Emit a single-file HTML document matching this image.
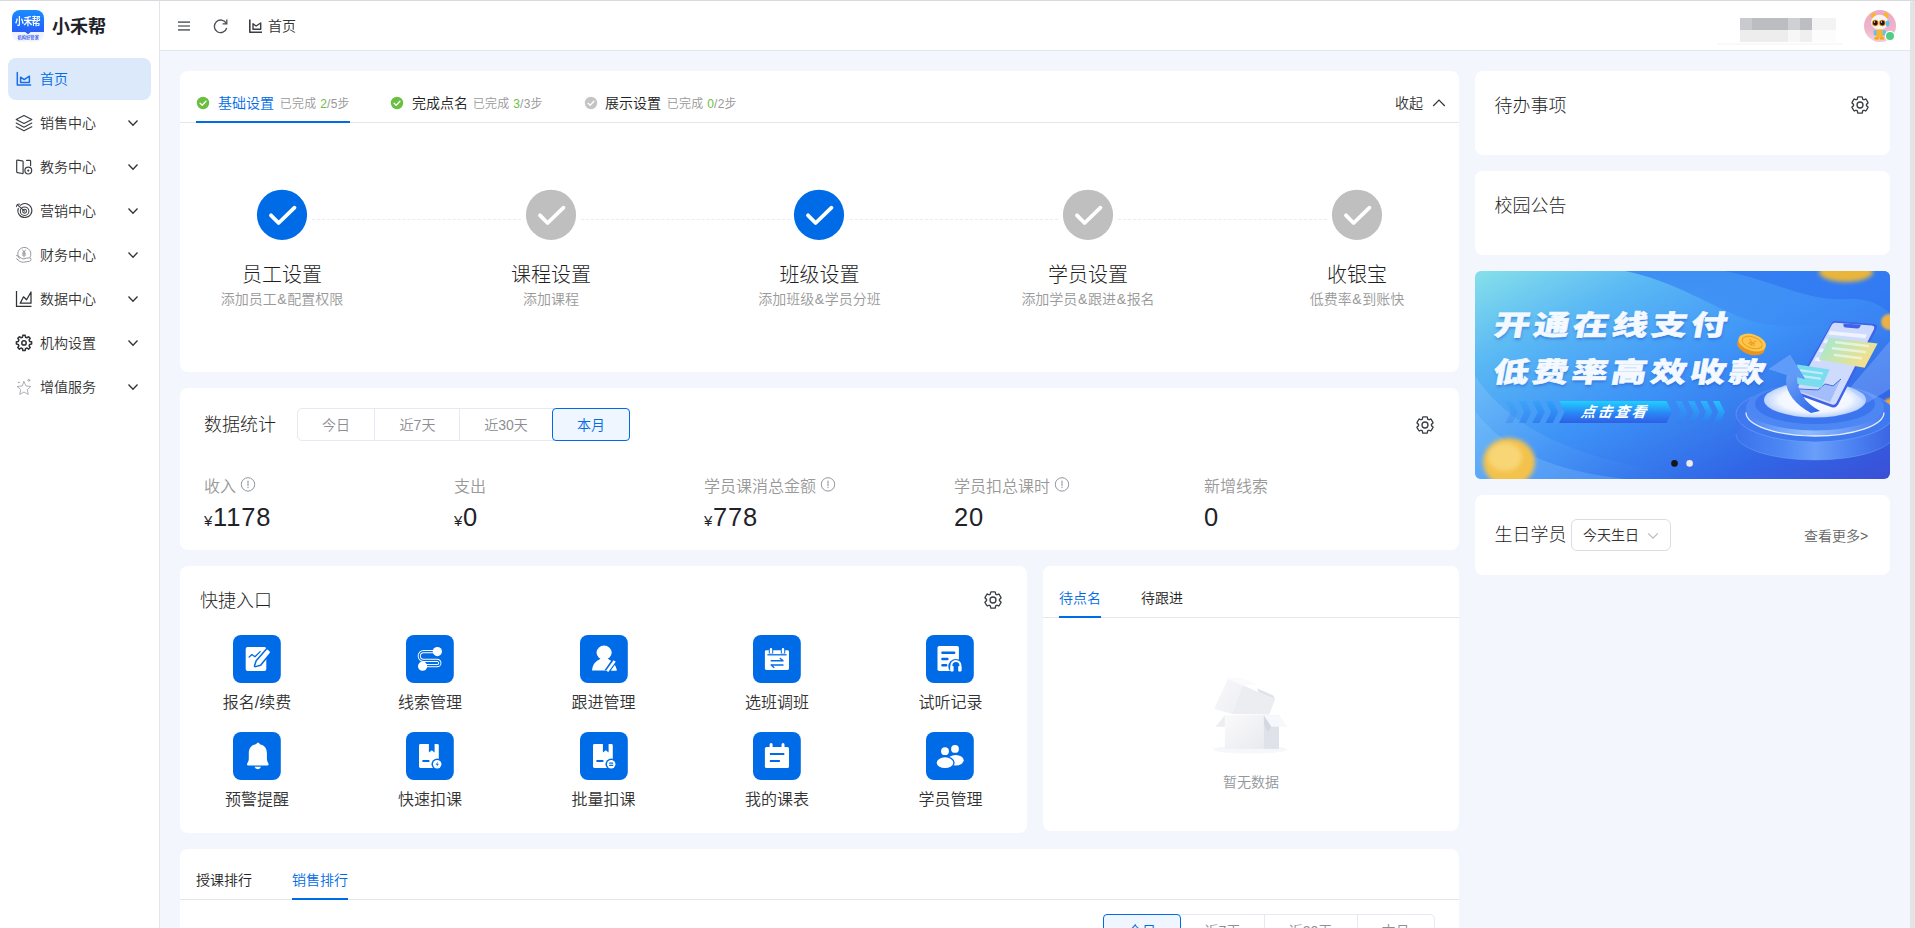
<!DOCTYPE html>
<html lang="zh-CN">
<head>
<meta charset="utf-8">
<title>小禾帮 - 首页</title>
<style>
*{box-sizing:border-box;margin:0;padding:0}
html,body{width:1915px;height:928px;overflow:hidden}
body{position:relative;background:#f3f6fd;font-family:"Liberation Sans","Noto Sans CJK SC",sans-serif;font-size:14px;font-weight:350;color:#333}
.abs{position:absolute}
.t{position:absolute;white-space:nowrap;line-height:1;}
.card{position:absolute;background:#fff;border-radius:8px}
svg{display:block;overflow:visible}
/* top line + scrollbar */
#topline{left:0;top:0;width:1915px;height:1px;background:#d9dae0}
#scroll{left:1910px;top:1px;width:5px;height:927px;background:#e4e4e5;border-top-left-radius:3px}
/* sidebar */
#side{left:0;top:1px;width:160px;height:927px;background:#fff;border-right:1px solid #e3e4ea}
#head{left:160px;top:1px;width:1750px;height:50px;background:#fff;border-bottom:1px solid #e3e5ec}
.mi{position:absolute;left:8px;width:143px;height:42px;border-radius:8px}
.mi .ic{position:absolute;left:8px;top:13px;width:16px;height:16px}
.mi .tx{position:absolute;left:32px;top:0;line-height:42px;font-size:14px;color:#333}
.mi .ch{position:absolute;left:120px;top:17px;width:10px;height:8px}
.mi.on{background:#dbe9fb}
.mi.on .tx{color:#006be6}
.bt{font-size:27.8px;font-weight:900;color:#f4f9ff;letter-spacing:2.8px;transform-origin:0 100%;transform:scaleX(1.285) skewX(-8deg);-webkit-text-stroke:0.55px #f4f9ff;text-shadow:0.5px 2px 2.5px rgba(30,80,200,0.5)}
.blue{color:#006be6}
.g9{color:#999}
</style>
</head>
<body>
<svg width="0" height="0" style="position:absolute"><defs>
<symbol id="gear6" viewBox="0 0 48 48"><g fill="none" stroke="#3a3d42" stroke-width="2.9" stroke-linejoin="round"><path d="M17.48 11.68Q18.27 11.23 18.53 9.61L18.97 6.83Q19.07 6.17 20.35 6.17L27.65 6.17Q28.93 6.17 29.03 6.83L29.47 9.61Q29.73 11.23 30.52 11.68L31.41 12.20Q32.20 12.65 33.73 12.06L36.36 11.06Q36.98 10.82 37.62 11.93L41.27 18.24Q41.91 19.35 41.39 19.77L39.20 21.54Q37.93 22.57 37.93 23.49L37.93 24.51Q37.93 25.43 39.20 26.46L41.39 28.23Q41.91 28.65 41.27 29.76L37.62 36.07Q36.98 37.18 36.36 36.94L33.73 35.94Q32.20 35.35 31.41 35.80L30.52 36.32Q29.73 36.77 29.47 38.39L29.03 41.17Q28.93 41.83 27.65 41.83L20.35 41.83Q19.07 41.83 18.97 41.17L18.53 38.39Q18.27 36.77 17.48 36.32L16.59 35.80Q15.80 35.35 14.27 35.94L11.64 36.94Q11.02 37.18 10.38 36.07L6.73 29.76Q6.09 28.65 6.61 28.23L8.80 26.46Q10.07 25.43 10.07 24.51L10.07 23.49Q10.07 22.57 8.80 21.54L6.61 19.77Q6.09 19.35 6.73 18.24L10.38 11.93Q11.02 10.82 11.64 11.06L14.27 12.06Q15.80 12.65 16.59 12.20Z"/><circle cx="24" cy="24" r="6.5"/></g></symbol>
<symbol id="info" viewBox="0 0 16 16"><circle cx="8" cy="7.4" r="6.7" fill="none" stroke="#8b8f99" stroke-width="0.95"/><path d="M8 3.6V9.2" stroke="#8b8f99" stroke-width="1" fill="none"/><circle cx="8" cy="10.6" r="0.65" fill="#8b8f99"/></symbol>
</defs></svg>
<div class="abs" id="topline"></div>
<div class="abs" id="scroll"></div>

<!-- ============ SIDEBAR ============ -->
<div class="abs" id="side">
  <div class="abs" id="logo" style="left:12px;top:9px;width:32px;height:32px;border-radius:8px;overflow:hidden;background:linear-gradient(180deg,#1a8cff 0%,#1f6bff 50%,#2a5ef6 67.5%,#eef2ff 68.5%,#f6f8ff 100%)">
    <span class="t" style="left:3.2px;top:7.2px;font-size:9px;font-weight:700;color:#fff;letter-spacing:-0.4px;transform:scale(0.98,1.12);transform-origin:0 0">小禾帮</span>
    <svg class="abs" style="left:0;top:0" width="32" height="32" viewBox="0 0 32 32"><path d="M12.6 21.6h6.8L16 24.2z" fill="#2a5ef6"/></svg>
    <span class="t" style="left:5.5px;top:25.8px;font-size:4.2px;font-weight:700;color:#3f66f0;letter-spacing:0.1px">机构好管家</span>
  </div>
  <span class="t" id="brand" style="left:52px;top:17px;font-size:18px;font-weight:700;color:#1f2329">小禾帮</span>
  <div class="mi on" style="top:57px"><span class="tx">首页</span></div>
  <div class="mi" style="top:101px"><span class="tx">销售中心</span><svg class="ch" viewBox="0 0 10 8"><path d="M0.5 1.5 5 6.3 9.5 1.5" fill="none" stroke="#333" stroke-width="1.3"/></svg></div>
  <div class="mi" style="top:145px"><span class="tx">教务中心</span><svg class="ch" viewBox="0 0 10 8"><path d="M0.5 1.5 5 6.3 9.5 1.5" fill="none" stroke="#333" stroke-width="1.3"/></svg></div>
  <div class="mi" style="top:189px"><span class="tx">营销中心</span><svg class="ch" viewBox="0 0 10 8"><path d="M0.5 1.5 5 6.3 9.5 1.5" fill="none" stroke="#333" stroke-width="1.3"/></svg></div>
  <div class="mi" style="top:233px"><span class="tx">财务中心</span><svg class="ch" viewBox="0 0 10 8"><path d="M0.5 1.5 5 6.3 9.5 1.5" fill="none" stroke="#333" stroke-width="1.3"/></svg></div>
  <div class="mi" style="top:277px"><span class="tx">数据中心</span><svg class="ch" viewBox="0 0 10 8"><path d="M0.5 1.5 5 6.3 9.5 1.5" fill="none" stroke="#333" stroke-width="1.3"/></svg></div>
  <div class="mi" style="top:321px"><span class="tx">机构设置</span><svg class="ch" viewBox="0 0 10 8"><path d="M0.5 1.5 5 6.3 9.5 1.5" fill="none" stroke="#333" stroke-width="1.3"/></svg></div>
  <div class="mi" style="top:365px"><span class="tx">增值服务</span><svg class="ch" viewBox="0 0 10 8"><path d="M0.5 1.5 5 6.3 9.5 1.5" fill="none" stroke="#333" stroke-width="1.3"/></svg></div>
</div>

<!-- sidebar icons (page coordinates) -->
<svg class="abs" id="sideicons" style="left:0;top:0" width="160" height="420" viewBox="0 0 160 420" fill="none" stroke-linecap="round" stroke-linejoin="round">
  <!-- 首页 -->
  <g stroke="#1a6ee8" stroke-width="1.5">
    <path d="M17.3 72.5V85.1H30.6"/>
    <path d="M20.6 77.2 24.2 79.6 29.4 76.2V82.4H20.6Z"/>
  </g>
  <!-- 销售中心 -->
  <g stroke="#3a3d42" stroke-width="1.15">
    <path d="M24 115.4 31.8 119.5 24 123.6 16.2 119.5Z"/>
    <path d="M16.2 123.1 24 127.2 31.8 123.1"/>
    <path d="M16.2 126.7 24 130.8 31.8 126.7"/>
  </g>
  <!-- 教务中心 -->
  <g stroke="#3a3d42" stroke-width="1.2">
    <path d="M16.7 160.9Q16.7 160 17.6 160.1L22.4 160.9Q23.1 161 23.1 161.8V172.8Q23.1 173.7 22.3 173.5L17.5 172.7Q16.7 172.6 16.7 171.8Z"/>
    <path d="M26.6 160.4H29.8Q30.6 160.4 30.6 161.2V165.6"/>
    <circle cx="28.3" cy="170.6" r="3.4"/>
    <circle cx="28.3" cy="170.6" r="0.5" fill="#3a3d42"/>
  </g>
  <!-- 营销中心 -->
  <g stroke="#3a3d42" stroke-width="1.05">
    <path d="M20.3 205.3A7 7 0 1 1 18.3 208.2"/>
    <circle cx="24.6" cy="211.2" r="4.3"/>
    <circle cx="24.6" cy="211.2" r="1.9"/>
    <path d="M24.6 211.2 17.2 204.6M17.2 204.6 16.4 206.6M17.2 204.6 19.4 204.1"/>
  </g>
  <!-- 财务中心 -->
  <g stroke="#8a8d92" stroke-width="0.9">
    <path d="M19.3 258.3A6.6 6.6 0 1 1 30 257.4"/>
    <path d="M22.6 250 24 252.4 25.4 250M24 252.4V257M22.3 253.2H25.7M22.3 255H25.7"/>
    <path d="M16.6 255.5Q19.5 256.5 21.5 258.3 23 259.5 25 258.6L26.6 258H29.8Q31 258 31 259.4 31 261 29.6 261.3L23.5 262.2Q21.5 262.4 19.8 261.3L16.6 258.8"/>
  </g>
  <!-- 数据中心 -->
  <g stroke="#2f3236" stroke-width="1.25" stroke-linejoin="miter" stroke-linecap="butt">
    <path d="M16.5 291V306.4H31.5"/>
    <path d="M20.2 303.2 23.5 296.8 26.6 299.8 31 292V303.2Z" stroke-linejoin="round"/>
  </g>
  <!-- 机构设置 (8 tooth gear) -->
  <g stroke="#2f3236" stroke-width="1.5">
    <path d="M22.51 337.19 L22.83 335.29 L25.17 335.29 L25.49 337.19 L26.98 337.81 L28.55 336.69 L30.21 338.35 L29.09 339.92 L29.71 341.41 L31.61 341.73 L31.61 344.07 L29.71 344.39 L29.09 345.88 L30.21 347.45 L28.55 349.11 L26.98 347.99 L25.49 348.61 L25.17 350.51 L22.83 350.51 L22.51 348.61 L21.02 347.99 L19.45 349.11 L17.79 347.45 L18.91 345.88 L18.29 344.39 L16.39 344.07 L16.39 341.73 L18.29 341.41 L18.91 339.92 L17.79 338.35 L19.45 336.69 L21.02 337.81Z"/>
    <circle cx="24" cy="342.9" r="2.2"/>
  </g>
  <!-- 增值服务 -->
  <g stroke="#a3a6ab" stroke-width="0.9">
    <path d="M24 381.6 26 386 30.8 386.5 27.2 389.7 28.3 394.4 24 392 19.7 394.4 20.8 389.7 17.2 386.5 22 386Z"/>
    <circle cx="28.8" cy="380.3" r="1"/>
    <circle cx="18.8" cy="382.4" r="0.4"/>
  </g>
</svg>

<!-- ============ HEADER ============ -->
<div class="abs" id="head">
  <!-- local coords: page x-160, page y-1 -->
  <svg class="abs" style="left:0;top:0" width="160" height="50" viewBox="160 1 160 50" fill="none">
    <!-- hamburger -->
    <path d="M178 22.1H190M178 26H190M178 29.9H190" stroke="#6f7277" stroke-width="1.6"/>
    <!-- refresh -->
    <path d="M226.3 23.6A6.3 6.3 0 1 0 226.7 28" stroke="#4a4d52" stroke-width="1.3"/>
    <path d="M226.8 19.6V23.8H222.6" stroke="#4a4d52" stroke-width="1.3"/>
    <!-- chart -->
    <g stroke="#3a3d42" stroke-width="1.6" stroke-linejoin="round">
      <path d="M249.8 19.6V32.2H262"/>
      <path d="M253 23.8 256.1 26 260.7 23V29.3H253Z" stroke-width="1.4"/>
    </g>
  </svg>
  <span class="t" style="left:108px;top:18px;font-size:14px;color:#333">首页</span>
  <!-- blurred user name (mosaic) -->
  <div class="abs" style="left:1580px;top:17px;width:96px;height:24px">
    <div class="abs" style="left:0;top:0;width:12px;height:12px;background:#c9cacd"></div>
    <div class="abs" style="left:12px;top:0;width:36px;height:12px;background:#bcbdc0"></div>
    <div class="abs" style="left:48px;top:0;width:12px;height:12px;background:#cfd0d3"></div>
    <div class="abs" style="left:60px;top:0;width:12px;height:12px;background:#bdbec1"></div>
    <div class="abs" style="left:72px;top:0;width:24px;height:12px;background:#f3f3f4"></div>
    <div class="abs" style="left:0;top:12px;width:48px;height:12px;background:#ededee"></div>
    <div class="abs" style="left:48px;top:12px;width:12px;height:12px;background:#f7f7f8"></div>
    <div class="abs" style="left:60px;top:12px;width:12px;height:12px;background:#efeff0"></div>
    <div class="abs" style="left:72px;top:12px;width:24px;height:12px;background:#fcfcfc"></div>
  </div>
  <div class="abs" style="left:1557px;top:42px;width:126px;height:2px;background:#f9f9fb"></div>
  <!-- avatar -->
  <svg class="abs" style="left:1703px;top:7px" width="36" height="36" viewBox="0 0 36 36">
    <defs><clipPath id="avc"><circle cx="17" cy="18" r="16"/></clipPath><linearGradient id="avg" x1="0" y1="0" x2="0" y2="1"><stop offset="0" stop-color="#ecaac4"/><stop offset="0.6" stop-color="#eeb4ca"/><stop offset="1" stop-color="#f6d3df"/></linearGradient></defs>
    <circle cx="17" cy="18" r="16" fill="url(#avg)"/>
    <g clip-path="url(#avc)">
      <ellipse cx="17" cy="33" rx="9" ry="2" fill="#f3c9d9"/>
      <!-- ears -->
      <ellipse cx="10.5" cy="7.6" rx="2.6" ry="2.8" fill="#f7b62e"/>
      <ellipse cx="23" cy="7.3" rx="2.6" ry="2.8" fill="#f7b62e"/>
      <!-- head -->
      <ellipse cx="16.6" cy="14.2" rx="8.6" ry="7.4" fill="#f7f4f6"/>
      <!-- headphone -->
      <ellipse cx="24.6" cy="15.4" rx="1.9" ry="3" fill="#5fc3f0"/>
      <!-- glasses -->
      <circle cx="12.3" cy="15" r="3.3" fill="#e79a1c"/>
      <circle cx="19.3" cy="15" r="3.3" fill="#e79a1c"/>
      <circle cx="12.3" cy="15" r="2.4" fill="#241016"/>
      <circle cx="19.3" cy="15" r="2.4" fill="#241016"/>
      <circle cx="11.5" cy="14" r="0.7" fill="#fff"/>
      <circle cx="18.5" cy="14" r="0.7" fill="#fff"/>
      <!-- body -->
      <rect x="12.6" y="21.4" width="8" height="8" rx="2.4" fill="#f7b62e"/>
      <rect x="10.6" y="22" width="3" height="5.5" rx="1.5" fill="#5fc3f0"/>
      <rect x="19.6" y="22" width="3.4" height="5.5" rx="1.5" fill="#5fc3f0"/>
      <ellipse cx="13.6" cy="30.4" rx="2.6" ry="1.4" fill="#f5a81d"/>
      <ellipse cx="19" cy="30.4" rx="2.6" ry="1.4" fill="#f5a81d"/>
    </g>
    <circle cx="27" cy="28" r="5.2" fill="#fff"/>
    <circle cx="27" cy="28" r="4" fill="#52cc83"/>
  </svg>
</div>

<!-- ============ CARD 1 : steps ============ -->
<div class="card" id="c1" style="left:180px;top:71px;width:1279px;height:301px">
  <div class="abs" style="left:0;top:51px;width:1279px;height:1px;background:#e6e6e9"></div>
  <div class="abs" style="left:16px;top:50px;width:154px;height:2px;background:#006be6"></div>
  <svg class="abs" style="left:16px;top:25px" width="14" height="14" viewBox="0 0 14 14"><circle cx="7" cy="7" r="6.2" fill="#6abf40"/><path d="M4.1 7.2 6.2 9.2 9.9 5.3" fill="none" stroke="#fff" stroke-width="1.3" stroke-linecap="round" stroke-linejoin="round"/></svg>
  <span class="t" style="left:38px;top:25px;font-size:14px;color:#006be6">基础设置</span>
  <span class="t" style="left:99.8px;top:27px;font-size:12px;letter-spacing:0.25px;color:#999">已完成 <span style="color:#6abf40">2</span>/5步</span>
  <svg class="abs" style="left:210px;top:25px" width="14" height="14" viewBox="0 0 14 14"><circle cx="7" cy="7" r="6.2" fill="#6abf40"/><path d="M4.1 7.2 6.2 9.2 9.9 5.3" fill="none" stroke="#fff" stroke-width="1.3" stroke-linecap="round" stroke-linejoin="round"/></svg>
  <span class="t" style="left:232px;top:25px;font-size:14px;color:#222">完成点名</span>
  <span class="t" style="left:292.8px;top:27px;font-size:12px;letter-spacing:0.25px;color:#999">已完成 <span style="color:#6abf40">3</span>/3步</span>
  <svg class="abs" style="left:404px;top:25px" width="14" height="14" viewBox="0 0 14 14"><circle cx="7" cy="7" r="6.2" fill="#c4c4c4"/><path d="M4.1 7.2 6.2 9.2 9.9 5.3" fill="none" stroke="#fff" stroke-width="1.3" stroke-linecap="round" stroke-linejoin="round"/></svg>
  <span class="t" style="left:425px;top:25px;font-size:14px;color:#222">展示设置</span>
  <span class="t" style="left:486.8px;top:27px;font-size:12px;letter-spacing:0.25px;color:#999">已完成 <span style="color:#6abf40">0</span>/2步</span>
  <span class="t" style="left:1215px;top:25px;font-size:14px;color:#333">收起</span>
  <svg class="abs" style="left:1252px;top:27px" width="14" height="10" viewBox="0 0 14 10"><path d="M1.2 8 7 2 12.8 8" fill="none" stroke="#333" stroke-width="1.2"/></svg>
  <div class="abs" style="left:132px;top:148px;width:209px;height:0;border-top:1px dashed #ebecf1"></div>
  <div class="abs" style="left:401px;top:148px;width:208.5px;height:0;border-top:1px dashed #ebecf1"></div>
  <div class="abs" style="left:669.5px;top:148px;width:208.5px;height:0;border-top:1px dashed #ebecf1"></div>
  <div class="abs" style="left:938px;top:148px;width:209px;height:0;border-top:1px dashed #ebecf1"></div>
  <svg class="abs" style="left:76px;top:118px" width="52" height="52" viewBox="-26 -26 52 52"><circle cx="0" cy="-0.2" r="25.1" fill="#006be6"/><path d="M-11 0.3-3.4 8 12.5-7.3" fill="none" stroke="#fff" stroke-width="3.8" stroke-linecap="round" stroke-linejoin="round"/></svg>
  <span class="t" style="left:-48px;width:300px;text-align:center;top:194px;font-size:20px;font-weight:300;color:#1f1f1f">员工设置</span>
  <span class="t" style="left:-48px;width:300px;text-align:center;top:221px;font-size:14px;color:#999">添加员工<span style="margin:0 0.65px">&amp;</span>配置权限</span>
  <svg class="abs" style="left:345px;top:118px" width="52" height="52" viewBox="-26 -26 52 52"><circle cx="0" cy="-0.2" r="25.1" fill="#bfbfbf"/><path d="M-11 0.3-3.4 8 12.5-7.3" fill="none" stroke="#fff" stroke-width="3.8" stroke-linecap="round" stroke-linejoin="round"/></svg>
  <span class="t" style="left:221px;width:300px;text-align:center;top:194px;font-size:20px;font-weight:300;color:#1f1f1f">课程设置</span>
  <span class="t" style="left:221px;width:300px;text-align:center;top:221px;font-size:14px;color:#999">添加课程</span>
  <svg class="abs" style="left:612.8px;top:118px" width="52" height="52" viewBox="-26 -26 52 52"><circle cx="0" cy="-0.2" r="25.1" fill="#006be6"/><path d="M-11 0.3-3.4 8 12.5-7.3" fill="none" stroke="#fff" stroke-width="3.8" stroke-linecap="round" stroke-linejoin="round"/></svg>
  <span class="t" style="left:489.5px;width:300px;text-align:center;top:194px;font-size:20px;font-weight:300;color:#1f1f1f">班级设置</span>
  <span class="t" style="left:489.5px;width:300px;text-align:center;top:221px;font-size:14px;color:#999">添加班级<span style="margin:0 0.65px">&amp;</span>学员分班</span>
  <svg class="abs" style="left:882px;top:118px" width="52" height="52" viewBox="-26 -26 52 52"><circle cx="0" cy="-0.2" r="25.1" fill="#bfbfbf"/><path d="M-11 0.3-3.4 8 12.5-7.3" fill="none" stroke="#fff" stroke-width="3.8" stroke-linecap="round" stroke-linejoin="round"/></svg>
  <span class="t" style="left:758px;width:300px;text-align:center;top:194px;font-size:20px;font-weight:300;color:#1f1f1f">学员设置</span>
  <span class="t" style="left:758px;width:300px;text-align:center;top:221px;font-size:14px;color:#999">添加学员<span style="margin:0 0.65px">&amp;</span>跟进<span style="margin:0 0.65px">&amp;</span>报名</span>
  <svg class="abs" style="left:1151px;top:118px" width="52" height="52" viewBox="-26 -26 52 52"><circle cx="0" cy="-0.2" r="25.1" fill="#bfbfbf"/><path d="M-11 0.3-3.4 8 12.5-7.3" fill="none" stroke="#fff" stroke-width="3.8" stroke-linecap="round" stroke-linejoin="round"/></svg>
  <span class="t" style="left:1027px;width:300px;text-align:center;top:194px;font-size:20px;font-weight:300;color:#1f1f1f">收银宝</span>
  <span class="t" style="left:1027px;width:300px;text-align:center;top:221px;font-size:14px;color:#999">低费率<span style="margin:0 0.65px">&amp;</span>到账快</span>
</div>

<!-- ============ CARD 2 : stats ============ -->
<div class="card" id="c2" style="left:180px;top:388px;width:1279px;height:162px">
  <span class="t" style="left:24px;top:28px;font-size:18px;font-weight:300;color:#1f1f1f">数据统计</span>
  <div class="abs" style="left:117px;top:20px;width:333px;height:33px;border:1px solid #e6e8f2;border-radius:5px;background:#fff"></div>
  <span class="t" style="left:117px;width:78px;text-align:center;top:29.5px;font-size:14px;color:#8e8e93">今日</span>
  <div class="abs" style="left:194px;top:20px;width:1px;height:33px;background:#e6e8f2"></div>
  <span class="t" style="left:195px;width:85px;text-align:center;top:29.5px;font-size:14px;color:#8e8e93">近7天</span>
  <div class="abs" style="left:279px;top:20px;width:1px;height:33px;background:#e6e8f2"></div>
  <span class="t" style="left:280px;width:92px;text-align:center;top:29.5px;font-size:14px;color:#8e8e93">近30天</span>
  <div class="abs" style="left:372px;top:20px;width:78px;height:33px;border:1px solid #006be6;background:#f0f6ff;border-radius:4px"></div>
  <span class="t" style="left:372px;width:78px;text-align:center;top:29.5px;font-size:14px;color:#006be6">本月</span>
  <svg class="abs" style="left:1233.9px;top:25.9px" width="22" height="22"><use href="#gear6"/></svg>
  <span class="t" style="left:24px;top:90.6px;font-size:16px;color:#999">收入</span>
  <svg class="abs" style="left:60.0px;top:88.7px" width="16" height="16"><use href="#info"/></svg>
  <span class="t" style="left:24px;top:116.8px;font-size:25.5px;letter-spacing:0.9px;color:#1f2329"><span style="font-size:15px;letter-spacing:0.6px">¥</span>1178</span>
  <span class="t" style="left:274px;top:90.6px;font-size:16px;color:#999">支出</span>
  <span class="t" style="left:274px;top:116.8px;font-size:25.5px;letter-spacing:0.9px;color:#1f2329"><span style="font-size:15px;letter-spacing:0.6px">¥</span>0</span>
  <span class="t" style="left:524px;top:90.6px;font-size:16px;color:#999">学员课消总金额</span>
  <svg class="abs" style="left:640.0px;top:88.7px" width="16" height="16"><use href="#info"/></svg>
  <span class="t" style="left:524px;top:116.8px;font-size:25.5px;letter-spacing:0.9px;color:#1f2329"><span style="font-size:15px;letter-spacing:0.6px">¥</span>778</span>
  <span class="t" style="left:774px;top:90.6px;font-size:16px;color:#999">学员扣总课时</span>
  <svg class="abs" style="left:874.0px;top:88.7px" width="16" height="16"><use href="#info"/></svg>
  <span class="t" style="left:774px;top:116.8px;font-size:25.5px;letter-spacing:0.9px;color:#1f2329">20</span>
  <span class="t" style="left:1024px;top:90.6px;font-size:16px;color:#999">新增线索</span>
  <span class="t" style="left:1024px;top:116.8px;font-size:25.5px;letter-spacing:0.9px;color:#1f2329">0</span>
</div>

<!-- ============ CARD 3 : shortcuts ============ -->
<div class="card" id="c3" style="left:180px;top:566px;width:847px;height:267px">
  <span class="t" style="left:20px;top:25.5px;font-size:18px;font-weight:300;color:#1f1f1f">快捷入口</span>
  <svg class="abs" style="left:801.8px;top:22.9px" width="22" height="22"><use href="#gear6"/></svg>
  <svg class="abs" style="left:53px;top:69px" width="48" height="48" viewBox="0 0 48 48" fill="#fff"><rect x="0" y="0" width="47.8" height="48" rx="8" fill="#006be6"/><path d="M14.7 11.9H31.3Q33.3 11.9 33.3 13.9V34.1Q33.3 36.1 31.3 36.1H14.7Q12.7 36.1 12.7 34.1V13.9Q12.7 11.9 14.7 11.9Z" fill="#fff"/>
<path d="M16.2 22 18.9 19.6 21.9 21.8 27.2 16.6" fill="none" stroke="#006be6" stroke-width="1.3" stroke-linecap="round" stroke-linejoin="round"/>
<path d="M33.2 14.2Q34.4 13.2 35.6 14.4L37.2 16Q38.2 17.2 37.2 18.4L27.6 30.2 22.6 31.6Q21.2 31.9 21.6 30.5L23.2 25.8Z" fill="#fff" stroke="#006be6" stroke-width="1.5" stroke-linejoin="round"/></svg>
  <span class="t" style="left:-3px;width:160px;text-align:center;top:129px;font-size:16px;color:#333">报名/续费</span>
  <svg class="abs" style="left:226px;top:69px" width="48" height="48" viewBox="0 0 48 48" fill="#fff"><rect x="0" y="0" width="47.8" height="48" rx="8" fill="#006be6"/><path d="M31.4 16.7H17.6A4.35 4.35 0 0 0 17.6 25.4H31.2A2.65 2.65 0 0 1 31.2 30.7H16.6" fill="none" stroke="#fff" stroke-width="3.2"/>
<path d="M31.4 16.7H17.6A4.35 4.35 0 0 0 17.6 25.4H31.2A2.65 2.65 0 0 1 31.2 30.7H16.6" fill="none" stroke="#006be6" stroke-width="1.3"/>
<circle cx="31.4" cy="16.6" r="4.6" fill="#fff"/><circle cx="16.6" cy="31.2" r="4.6" fill="#fff"/></svg>
  <span class="t" style="left:170px;width:160px;text-align:center;top:129px;font-size:16px;color:#333">线索管理</span>
  <svg class="abs" style="left:399.5px;top:69px" width="48" height="48" viewBox="0 0 48 48" fill="#fff"><rect x="0" y="0" width="47.8" height="48" rx="8" fill="#006be6"/><ellipse cx="24.1" cy="17.6" rx="7.6" ry="7"/>
<path d="M12 35.4Q12.6 27.5 19.6 24.2L21.5 22.5H26.7L28.6 24.2Q35.6 27.5 36.6 35.4Z"/>
<path d="M34.6 25.6 27 36.4" stroke="#006be6" stroke-width="5.4" stroke-linecap="butt"/>
<path d="M34.7 25.9 27.2 36.3" stroke="#fff" stroke-width="2.6" stroke-linecap="butt"/>
<path d="M36.8 35.4H31.2L34.4 30.6Q36.2 32.5 36.8 35.4Z"/></svg>
  <span class="t" style="left:343.5px;width:160px;text-align:center;top:129px;font-size:16px;color:#333">跟进管理</span>
  <svg class="abs" style="left:573px;top:69px" width="48" height="48" viewBox="0 0 48 48" fill="#fff"><rect x="0" y="0" width="47.8" height="48" rx="8" fill="#006be6"/><rect x="11.9" y="15.3" width="24.1" height="19.7" rx="1.4"/>
<path d="M14.4 19.8H33.6" stroke="#006be6" stroke-width="1.3"/>
<path d="M18 13.6V18.6M30 13.6V18.6" stroke="#006be6" stroke-width="4.4"/>
<path d="M18 14.2V17.4M30 14.2V17.4" stroke="#fff" stroke-width="2.4" stroke-linecap="round"/>
<path d="M18.2 25.8H30M27.3 23.4 30 25.8" fill="none" stroke="#006be6" stroke-width="1.4" stroke-linecap="round" stroke-linejoin="round"/>
<path d="M30 30H18.2M20.9 32.4 18.2 30" fill="none" stroke="#006be6" stroke-width="1.4" stroke-linecap="round" stroke-linejoin="round"/></svg>
  <span class="t" style="left:517px;width:160px;text-align:center;top:129px;font-size:16px;color:#333">选班调班</span>
  <svg class="abs" style="left:746px;top:69px" width="48" height="48" viewBox="0 0 48 48" fill="#fff"><rect x="0" y="0" width="47.8" height="48" rx="8" fill="#006be6"/><rect x="11.5" y="10.9" width="21.4" height="25.1" rx="1.8"/>
<path d="M16.4 17.7H28.2M16.4 24H21.4M16.4 30.3H20.2" stroke="#006be6" stroke-width="2.4" stroke-linecap="round"/>
<circle cx="29.9" cy="31.6" r="7.6" fill="#006be6"/>
<rect x="22" y="36.2" width="16" height="4" fill="#006be6"/>
<path d="M25.4 35.8V30.4A4.5 4.5 0 0 1 34.4 30.4V35.8" fill="none" stroke="#fff" stroke-width="2"/>
<rect x="24.4" y="31" width="3.2" height="5.6" rx="0.8"/><rect x="32.2" y="31" width="3.2" height="5.6" rx="0.8"/></svg>
  <span class="t" style="left:690.5px;width:160px;text-align:center;top:129px;font-size:16px;color:#333">试听记录</span>
  <svg class="abs" style="left:53px;top:166px" width="48" height="48" viewBox="0 0 48 48" fill="#fff"><rect x="0" y="0" width="47.8" height="48" rx="8" fill="#006be6"/><path d="M24.8 10.6Q26.4 10.6 26.8 12.2C31.5 13 33.9 16.500 33.9 21V27Q33.9 29.500 35.4 31.400 36.2 33.4 34.2 33.4H15.4Q13.4 33.4 14.2 31.400 15.800 29.500 15.800 27V21C15.800 16.500 18.100 13 22.800 12.2 23.2 10.6 24.8 10.6Z"/>
<path d="M21.6 34.8H28Q27.4 37.2 24.8 37.2 22.2 37.2 21.6 34.8Z"/></svg>
  <span class="t" style="left:-3px;width:160px;text-align:center;top:226px;font-size:16px;color:#333">预警提醒</span>
  <svg class="abs" style="left:226px;top:166px" width="48" height="48" viewBox="0 0 48 48" fill="#fff"><rect x="0" y="0" width="47.8" height="48" rx="8" fill="#006be6"/><path d="M14.4 12H31.4Q32.8 12 32.8 13.4V34.6Q32.8 36 31.4 36H14.4Q13 36 13 34.6V13.4Q13 12 14.4 12Z"/>
<path d="M22.9 11.5H28.6V20.4L25.75 18.2 22.9 20.4Z" fill="#006be6"/>
<path d="M16.4 29H23.4" stroke="#006be6" stroke-width="2"/>
<circle cx="31.2" cy="32.2" r="5.7" fill="#006be6"/><circle cx="31.2" cy="32.2" r="4.2"/><path d="M32 29.3 29.6 32.7H31.3L30.5 35.1 32.9 31.7H31.2Z" fill="#006be6"/></svg>
  <span class="t" style="left:170px;width:160px;text-align:center;top:226px;font-size:16px;color:#333">快速扣课</span>
  <svg class="abs" style="left:399.5px;top:166px" width="48" height="48" viewBox="0 0 48 48" fill="#fff"><rect x="0" y="0" width="47.8" height="48" rx="8" fill="#006be6"/><path d="M14.4 12H31.4Q32.8 12 32.8 13.4V34.6Q32.8 36 31.4 36H14.4Q13 36 13 34.6V13.4Q13 12 14.4 12Z"/>
<path d="M22.9 11.5H28.6V20.4L25.75 18.2 22.9 20.4Z" fill="#006be6"/>
<path d="M16.4 29H23.4" stroke="#006be6" stroke-width="2"/>
<circle cx="31.2" cy="32.2" r="5.7" fill="#006be6"/><circle cx="31.2" cy="32.2" r="4.2"/><path d="M29.2 31.2H33.2M29.2 33.3H33.2" stroke="#006be6" stroke-width="1.3"/></svg>
  <span class="t" style="left:343.5px;width:160px;text-align:center;top:226px;font-size:16px;color:#333">批量扣课</span>
  <svg class="abs" style="left:573px;top:166px" width="48" height="48" viewBox="0 0 48 48" fill="#fff"><rect x="0" y="0" width="47.8" height="48" rx="8" fill="#006be6"/><rect x="11.9" y="14.9" width="24.1" height="21.1" rx="1.6"/>
<path d="M18.1 12.6V17M30 12.6V17" stroke="#fff" stroke-width="3" stroke-linecap="round"/>
<path d="M16.9 22H31.3M16.9 29H26.9" stroke="#006be6" stroke-width="2"/></svg>
  <span class="t" style="left:517px;width:160px;text-align:center;top:226px;font-size:16px;color:#333">我的课表</span>
  <svg class="abs" style="left:746px;top:166px" width="48" height="48" viewBox="0 0 48 48" fill="#fff"><rect x="0" y="0" width="47.8" height="48" rx="8" fill="#006be6"/><circle cx="29" cy="16.9" r="3.9"/>
<ellipse cx="29.7" cy="28.2" rx="8" ry="5.3"/>
<ellipse cx="19" cy="30.7" rx="9.7" ry="6.7" fill="#006be6"/>
<circle cx="19" cy="19.2" r="3.9"/>
<ellipse cx="19" cy="30.7" rx="8.3" ry="5.4"/></svg>
  <span class="t" style="left:690.5px;width:160px;text-align:center;top:226px;font-size:16px;color:#333">学员管理</span>
</div>

<!-- ============ CARD 4 : todo tabs ============ -->
<div class="card" id="c4" style="left:1043px;top:566px;width:416px;height:265px">
  <div class="abs" style="left:0;top:51px;width:416px;height:1px;background:#e6e6e9"></div>
  <div class="abs" style="left:16px;top:50px;width:42px;height:2px;background:#006be6"></div>
  <span class="t" style="left:16px;top:25.3px;font-size:14px;color:#006be6">待点名</span>
  <span class="t" style="left:98px;top:25.3px;font-size:14px;color:#222">待跟进</span>
  <svg class="abs" style="left:147px;top:99px" width="120" height="135" viewBox="0 0 825 928">
    <defs>
      <linearGradient id="eg1" x1="0" y1="0" x2="1" y2="1"><stop offset="0" stop-color="#fafafc"/><stop offset="1" stop-color="#e9eaef"/></linearGradient>
      <linearGradient id="eg2" x1="0" y1="0" x2="1" y2="1"><stop offset="0" stop-color="#f8f8fb"/><stop offset="1" stop-color="#eeeff3"/></linearGradient>
    </defs>
    <ellipse cx="415" cy="581" rx="256" ry="28" fill="#f6f7fb"/>
        <path d="M240 345 175 425H240Z" fill="#ecedf1"/>
    <rect x="240" y="345" width="270" height="232" fill="url(#eg1)"/>
    <path d="M508 345H612V577H508Z" fill="#e0e2ea"/>
    <path d="M508 345 560 425 534 460 508 405Z" fill="#d6d8e1"/>
    <path d="M508 345H615L668 425H560Z" fill="#f7f8fb"/>
    <path d="M165 300 262 92 362 140 288 336Z" fill="url(#eg2)"/>
    <path d="M262 92 345 86 462 134 362 140Z" fill="#fbfbfd"/>
    <path d="M288 336 362 140 585 236 545 340Z" fill="#ecedf1"/>
    <path d="M462 160 572 210 585 236 470 186Z" fill="#e2e3ea"/>
  </svg>
  <span class="t" style="left:108px;width:200px;text-align:center;top:209.3px;font-size:14px;color:#93969b">暂无数据</span>
</div>

<!-- ============ CARD 5 : ranking ============ -->
<div class="card" id="c5" style="left:180px;top:849px;width:1279px;height:120px">
  <div class="abs" style="left:0;top:50px;width:1279px;height:1px;background:#e6e6e9"></div>
  <div class="abs" style="left:112px;top:49px;width:56px;height:2px;background:#006be6"></div>
  <span class="t" style="left:16px;top:24px;font-size:14px;color:#222">授课排行</span>
  <span class="t" style="left:112px;top:24px;font-size:14px;color:#006be6">销售排行</span>
  <div class="abs" style="left:923px;top:65px;width:332px;height:33px;border:1px solid #e6e8f2;border-radius:5px;background:#fff"></div>
  <div class="abs" style="left:923px;top:65px;width:78px;height:33px;border:1px solid #006be6;background:#f0f6ff;border-radius:4px"></div>
  <span class="t" style="left:923px;width:78px;text-align:center;top:74.5px;font-size:14px;color:#006be6">今日</span>
  <span class="t" style="left:1001px;width:83px;text-align:center;top:74.5px;font-size:14px;color:#8e8e93">近7天</span>
  <div class="abs" style="left:1084px;top:65px;width:1px;height:33px;background:#e6e8f2"></div>
  <span class="t" style="left:1084px;width:93px;text-align:center;top:74.5px;font-size:14px;color:#8e8e93">近30天</span>
  <div class="abs" style="left:1177px;top:65px;width:1px;height:33px;background:#e6e8f2"></div>
  <span class="t" style="left:1177px;width:77px;text-align:center;top:74.5px;font-size:14px;color:#8e8e93">本月</span>
</div>

<!-- ============ RIGHT COLUMN ============ -->
<div class="card" id="r1" style="left:1475px;top:71px;width:415px;height:84px">
  <span class="t" style="left:19.5px;top:25.5px;font-size:18px;font-weight:300;color:#1f1f1f">待办事项</span>
  <svg class="abs" style="left:373.9px;top:22.9px" width="22" height="22"><use href="#gear6"/></svg>
</div>
<div class="card" id="r2" style="left:1475px;top:171px;width:415px;height:84px">
  <span class="t" style="left:19.5px;top:25.8px;font-size:18px;font-weight:300;color:#1f1f1f">校园公告</span>
</div>
<div class="abs" id="banner" style="left:1475px;top:271px;width:415px;height:208px;border-radius:6px;overflow:hidden">
  <svg class="abs" style="left:0;top:0" width="415" height="208" viewBox="0 0 415 208">
    <defs>
      <linearGradient id="bg0" x1="0" y1="0" x2="1" y2="1">
        <stop offset="0" stop-color="#86e0ea"/><stop offset="0.22" stop-color="#5bb9f4"/><stop offset="0.5" stop-color="#3d92f7"/><stop offset="0.8" stop-color="#3166e6"/><stop offset="1" stop-color="#3a4fd6"/>
      </linearGradient>
      <linearGradient id="bgw" x1="0" y1="0" x2="1" y2="1"><stop offset="0" stop-color="#2f7df2" stop-opacity="0.75"/><stop offset="1" stop-color="#3f86f6" stop-opacity="0.15"/></linearGradient>
      <linearGradient id="bgl" x1="0" y1="0" x2="1" y2="0.6"><stop offset="0" stop-color="#7fc4fb" stop-opacity="0.55"/><stop offset="1" stop-color="#4f8ff5" stop-opacity="0"/></linearGradient>
      <linearGradient id="btn" x1="0" y1="0" x2="0" y2="1"><stop offset="0" stop-color="#1fd0ff"/><stop offset="0.55" stop-color="#2a86f5"/><stop offset="1" stop-color="#2f5fe6"/></linearGradient>
      <linearGradient id="chl" x1="0" y1="0" x2="0" y2="1"><stop offset="0" stop-color="#2ea2fa"/><stop offset="1" stop-color="#2f74ee"/></linearGradient>
      <linearGradient id="chr" x1="0" y1="0" x2="0" y2="1"><stop offset="0" stop-color="#24c4ff"/><stop offset="1" stop-color="#2f7cf2"/></linearGradient>
      <linearGradient id="pod1" x1="0" y1="0" x2="0" y2="1"><stop offset="0" stop-color="#5e98f8"/><stop offset="0.75" stop-color="#3f74ea"/><stop offset="1" stop-color="#3560df"/></linearGradient>
      <linearGradient id="pod2" x1="0" y1="0" x2="1" y2="0"><stop offset="0" stop-color="#4a84f3"/><stop offset="0.45" stop-color="#8fbcff"/><stop offset="1" stop-color="#4a7cf0"/></linearGradient>
      <linearGradient id="pod3" x1="0" y1="0" x2="1" y2="0"><stop offset="0" stop-color="#3a72ec"/><stop offset="0.3" stop-color="#4d88f4"/><stop offset="0.5" stop-color="#6a9ffa"/><stop offset="0.75" stop-color="#4a80f1"/><stop offset="1" stop-color="#3a62e2"/></linearGradient>
      <linearGradient id="card1" x1="0" y1="0" x2="1" y2="0.5"><stop offset="0" stop-color="#9be9d9"/><stop offset="1" stop-color="#f6e088"/></linearGradient>
      <linearGradient id="arr" x1="0" y1="0" x2="1" y2="1"><stop offset="0" stop-color="#8cc0ff"/><stop offset="1" stop-color="#2b63ea"/></linearGradient>
      <radialGradient id="glow" cx="0.5" cy="0.5" r="0.5"><stop offset="0" stop-color="#ffffff"/><stop offset="0.7" stop-color="#f2f6ff"/><stop offset="1" stop-color="#bcd3ff"/></radialGradient>
      <filter id="bl3" x="-30%" y="-30%" width="160%" height="160%"><feGaussianBlur stdDeviation="2.2"/></filter>
      <filter id="bl1" x="-30%" y="-30%" width="160%" height="160%"><feGaussianBlur stdDeviation="0.9"/></filter>
    </defs>
    <rect width="415" height="208" fill="url(#bg0)"/>
    <!-- top right wave -->
    <path d="M150 0C200 10 235 35 270 48 320 66 360 40 415 70V0Z" fill="url(#bgw)"/>
    <path d="M250 0C300 10 330 30 372 28 395 27 405 34 415 42V0Z" fill="#2c6ff0" opacity="0.55"/>
    <!-- bottom left sweep -->
    <path d="M0 105C40 165 120 196 250 208H0Z" fill="url(#bgl)"/>
    <path d="M0 140C30 180 80 200 150 208H0Z" fill="#8fd0fb" opacity="0.25"/>
    <!-- coins (blurred) -->
    <g filter="url(#bl3)">
      <ellipse cx="34" cy="191" rx="26" ry="24" fill="#f3c24c"/>
      <ellipse cx="30" cy="186" rx="17" ry="14" fill="#f8d575"/>
      <ellipse cx="371" cy="1" rx="27" ry="10" fill="#e9b53a"/>
    </g>
    <g filter="url(#bl1)">
      <ellipse cx="415" cy="51" rx="9" ry="8" fill="#e8b14a"/>
      <ellipse cx="416" cy="134" rx="8" ry="7" fill="#f2a52c"/>
    </g>
    <!-- podium -->
    <path d="M261 143V163A79 26 0 0 0 419 163V143Z" fill="url(#pod3)"/>
    <path d="M261 163A79 26 0 0 0 419 163" fill="none" stroke="#7fa8fb" stroke-width="0.8" opacity="0.5"/>
    <ellipse cx="340" cy="143" rx="79" ry="28" fill="#3f79ef"/>
    <ellipse cx="340" cy="143" rx="79" ry="28" fill="none" stroke="#6f9ffa" stroke-width="0.8" opacity="0.8"/>
    <path d="M271 136V141.500A69 23.500 0 0 0 409 141.500V136Z" fill="url(#pod2)"/>
    <path d="M271 141.500A69 23.500 0 0 0 409 141.500" fill="none" stroke="#eaf2ff" stroke-width="1.3" opacity="0.95"/>
    <ellipse cx="340" cy="136" rx="69" ry="23.500" fill="#4d87f4"/>
    <ellipse cx="340" cy="133" rx="60" ry="20" fill="#3c76ee"/>
    <ellipse cx="340" cy="129" rx="51" ry="17.500" fill="url(#glow)"/>
    <!-- light beam -->
    <path d="M374 118 415 70V118L392 132Z" fill="#9bbcff" opacity="0.35"/>
    <!-- phone -->
    <path d="M356.5 52.2Q358 49.6 361 49.9L398.8 52.9Q403.6 53.6 401.6 58L363.2 133.6Q361 137.4 356.8 136.2L321.6 123.4Q317.2 121.6 319.4 117.6Z" fill="#3f63e6"/>
    <path d="M357 53.6Q358.2 51.6 360.6 51.8L396.8 54.6Q400.4 55.2 398.8 58.4L361.4 131.8Q359.8 134.4 356.8 133.4L323.8 121.4Q320.6 120 322.2 117Z" fill="#cfdbfc"/>
    <path d="M368.6 52.4 386 53.8 384.6 56.4Q383.8 57.6 382.2 57.5L370.4 56.6Q368.6 56.4 368.4 54.8Z" fill="#3f63e6"/>
    <path d="M355 60 392 63.5 390.2 67.2 353.4 63.6Z" fill="#eef3ff"/>
    <path d="M350 68.5 358 69.3 356.4 72.8 348.4 72Z" fill="#eef3ff"/>
    <path d="M345.4 77.5 352 78.2 350.4 81.6 343.8 80.9Z" fill="#eef3ff"/>
    <path d="M341 86.4 346.6 87 345 90.4 339.4 89.8Z" fill="#eef3ff"/>
    <!-- chart line on phone -->
    <path d="M324 118 343 119 350 113 358 115 366 108" fill="none" stroke="#2f55d8" stroke-width="1"/>
    <path d="M324 118 343 119 350 113 358 115 366 108 355 131 323 120Z" fill="#7ea4f6" opacity="0.55"/>
    <!-- cards -->
    <path d="M354.2 66.4 402.6 72.4 389.6 96.8 344 88.8Z" fill="url(#card1)"/>
    <path d="M361 71.2 393 75M358 77.2 390 81M360 84 386 87.2" stroke="#ffffff" stroke-width="2.6" stroke-linecap="round" opacity="0.55"/>
    <path d="M322.4 93.6 354.6 98.4 346.4 116.8 317.6 112.4Z" fill="#7adcef"/>
    <path d="M326 99.4 347 102.4M324 104.6 345 107.6" stroke="#d6f8ff" stroke-width="2.4" stroke-linecap="round" opacity="0.7"/>
    <!-- arrow -->
    <path d="M336 142C318 132 308 118 312 104L294 98 315 84 330 108 322 106C322 120 330 132 345 140Z" fill="url(#arr)"/>
    <path d="M294 98 315 84 330 108 322 106 312 104Z" fill="#5f9bf8"/>
    <!-- coin -->
    <g transform="rotate(18 277 72)">
      <ellipse cx="277" cy="75.5" rx="14.2" ry="8.2" fill="#e8951f"/>
      <ellipse cx="277" cy="71.5" rx="14.2" ry="8.2" fill="#fbc64a"/>
      <ellipse cx="277" cy="71.5" rx="10.4" ry="5.6" fill="none" stroke="#f09e22" stroke-width="1"/>
      <path d="M273.4 68.8 277 71.6 280.6 68.8M277 71.6V75M273.6 72H280.4M273.6 73.6H280.4" stroke="#ee9a20" stroke-width="0.9" fill="none"/>
    </g>
    <!-- chevrons left -->
    <g fill="url(#chl)">
      <path d="M30.3 130H37.5L43.0 141 37.5 152H30.3L35.8 141Z" opacity="0.3"/>
      <path d="M43.7 130H50.900000000000006L56.400000000000006 141 50.900000000000006 152H43.7L49.2 141Z" opacity="0.5"/>
      <path d="M57.2 130H64.4L69.9 141 64.4 152H57.2L62.7 141Z" opacity="0.75"/>
      <path d="M70.6 130H77.8L83.3 141 77.8 152H70.6L76.1 141Z" opacity="0.95"/>
    </g>
    <!-- button -->
    <path d="M84 130H191.500L197 141 191.500 152H84L89.5 141Z" fill="url(#btn)"/>
    <!-- chevrons right -->
    <g fill="url(#chr)">
      <path d="M200.5 130H206.9L212.4 141 206.9 152H200.5L206.0 141Z" opacity="0.4"/>
      <path d="M213 130H219.4L224.9 141 219.4 152H213L218.5 141Z" opacity="0.6"/>
      <path d="M225.5 130H231.9L237.4 141 231.9 152H225.5L231.0 141Z" opacity="0.8"/>
      <path d="M238 130H244.4L249.9 141 244.4 152H238L243.5 141Z" opacity="1"/>
    </g>
    <!-- dots -->
    <circle cx="199.500" cy="192.400" r="3.300" fill="#15161a"/>
    <circle cx="214.600" cy="192.400" r="3.300" fill="#f1e9ec"/>
  </svg>
  <span class="t bt" style="left:17px;top:41px">开通在线支付</span>
  <span class="t bt" style="left:16px;top:87.5px">低费率高效收款</span>
  <span class="t" style="left:106px;top:133.500px;font-size:14.500px;font-weight:700;font-style:italic;color:#fff;letter-spacing:2.400px;transform:skewX(-8deg)">点击查看</span>
</div>
<div class="card" id="r4" style="left:1475px;top:495px;width:415px;height:80px">
  <span class="t" style="left:19.5px;top:30.8px;font-size:18px;font-weight:300;color:#1f1f1f">生日学员</span>
  <div class="abs" style="left:96px;top:24px;width:100px;height:32px;border:1px solid #dcdde2;border-radius:6px;background:#fff"></div>
  <span class="t" style="left:108px;top:33px;font-size:14px;color:#333">今天生日</span>
  <svg class="abs" style="left:171.5px;top:36.5px" width="12" height="8" viewBox="0 0 12 8"><path d="M1.2 1.4 6 6.2 10.8 1.4" fill="none" stroke="#b5b7bc" stroke-width="1.1"/></svg>
  <span class="t" style="left:329px;top:33.5px;font-size:14px;color:#666">查看更多&gt;</span>
</div>

</body>
</html>
